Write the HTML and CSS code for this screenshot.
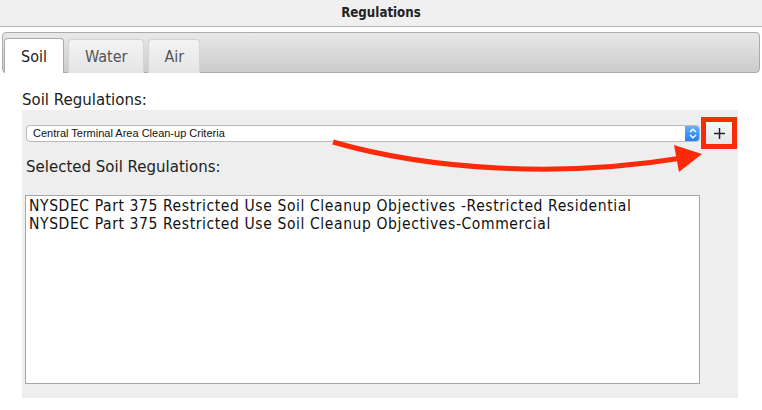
FILE: index.html
```html
<!DOCTYPE html>
<html>
<head>
<meta charset="utf-8">
<link rel="stylesheet" href="styles.css">
</head>
<body>
<div class="page">
  <div class="header">Regulations</div>
  <div class="tabbar">
    <div class="tab active">Soil</div>
    <div class="tab">Water</div>
    <div class="tab">Air</div>
  </div>
  <div class="content">
    <div class="label">Soil Regulations:</div>
    <div class="panel">
      <div class="select-row">
        <div class="select">
          <span class="select-text">Central Terminal Area Clean-up Criteria</span>
          <span class="select-arrows">
            <svg width="8" height="11" viewBox="0 0 8 11"><path d="M1 4 L4 1.2 L7 4 M1 7 L4 9.8 L7 7" fill="none" stroke="#fff" stroke-width="1.4"/></svg>
          </span>
        </div>
        <div class="highlight">
          <button class="add-btn"><svg width="11" height="11" viewBox="0 0 11 11"><path d="M5.5 0 V11 M0 5.5 H11" stroke="#1c2330" stroke-width="1.5"/></svg></button>
        </div>
      </div>
      <div class="label2">Selected Soil Regulations:</div>
      <div class="listbox">
        <div class="item">NYSDEC Part 375 Restricted Use Soil Cleanup Objectives -Restricted Residential</div>
        <div class="item">NYSDEC Part 375 Restricted Use Soil Cleanup Objectives-Commercial</div>
      </div>
    </div>
  </div>
  <svg class="annot" width="762" height="410" viewBox="0 0 762 410">
    <path d="M333 142 C430 170 560 178 682 158" fill="none" stroke="#fa2a0a" stroke-width="5"/>
    <polygon points="674,145 702,154 679,172" fill="#fa2a0a"/>
  </svg>
</div>
</body>
</html>
```
FILE: styles.css
```css
html, body {
  margin: 0;
  padding: 0;
  background: #ffffff;
}
.page {
  position: relative;
  width: 762px;
  height: 410px;
  overflow: hidden;
  font-family: "DejaVu Sans", sans-serif;
}
.header {
  height: 26px;
  line-height: 26px;
  background: #f0f0f0;
  border-bottom: 1px solid #b4b4b4;
  text-align: center;
  font-family: "DejaVu Sans Condensed", "DejaVu Sans", sans-serif;
  font-weight: bold;
  font-size: 13.2px;
  color: #222;
}
.tabbar {
  margin: 5px 2px 0 2px;
  height: 41px;
  border: 1px solid #aaaaaa;
  border-radius: 4px;
  background: linear-gradient(#e8e8e8, #cbcbcb);
  display: flex;
  align-items: flex-end;
  padding-left: 1px;
  gap: 4px;
  box-sizing: border-box;
}
.tab {
  height: 34px;
  box-sizing: border-box;
  padding: 0 16px;
  border: 1px solid #d3d3d3;
  border-bottom: none;
  border-radius: 4px 4px 0 0;
  background: linear-gradient(#f4f4f4, #e4e4e4);
  font-family: "DejaVu Sans Condensed", "DejaVu Sans", sans-serif;
  font-size: 16px;
  color: #555555;
  line-height: 34px;
  margin-bottom: -1px;
}
.tab:last-child {
  padding: 0 15px;
}
.tab.active {
  background: #ffffff;
  border-color: #aaaaaa;
  color: #222222;
  height: 35px;
  line-height: 36px;
}
.content {
  padding: 0 0 0 22px;
}
.label {
  margin-top: 17px;
  font-size: 15px;
  line-height: 20px;
  color: #222;
}
.panel {
  width: 716px;
  height: 288px;
  background: #eeeeee;
  box-sizing: border-box;
  padding-top: 7px;
}
.select-row {
  display: flex;
  align-items: center;
}
.select {
  margin-left: 4px;
  width: 674px;
  height: 17px;
  box-sizing: border-box;
  border: 1px solid #b9b9b9;
  border-radius: 4px;
  background: #ffffff;
  display: flex;
  align-items: center;
  overflow: hidden;
}
.select-text {
  flex: 1;
  padding-left: 6px;
  font-family: "Liberation Sans", Arial, sans-serif;
  font-size: 11px;
  color: #111;
}
.select-arrows {
  width: 15px;
  height: 17px;
  margin: -1px -1px -1px 0;
  border-radius: 0 4px 4px 0;
  background: linear-gradient(#6cb4fb, #1a7cf4);
  display: flex;
  align-items: center;
  justify-content: center;
}
.highlight {
  margin-left: 1px;
  width: 36px;
  height: 32px;
  box-sizing: border-box;
  border: 5px solid #fa2a0a;
  display: flex;
  align-items: center;
  justify-content: center;
}
.add-btn {
  width: 26px;
  height: 22px;
  margin: 0;
  padding: 0;
  border: none;
  background: linear-gradient(#f8f8f8, #e6e6e6);
  display: flex;
  align-items: center;
  justify-content: center;
}
.label2 {
  margin: 8px 0 0 4px;
  font-size: 15px;
  line-height: 20px;
  color: #222;
}
.listbox {
  margin: 18px 0 0 3px;
  width: 675px;
  height: 189px;
  box-sizing: border-box;
  border: 1px solid #a6a6a6;
  background: #ffffff;
  padding: 1px 3px;
}
.item {
  font-family: "DejaVu Sans Condensed", "DejaVu Sans", sans-serif;
  font-size: 15.5px;
  letter-spacing: 0.6px;
  line-height: 18px;
  color: #111;
  white-space: nowrap;
}
.annot {
  position: absolute;
  left: 0;
  top: 0;
  pointer-events: none;
}
```
